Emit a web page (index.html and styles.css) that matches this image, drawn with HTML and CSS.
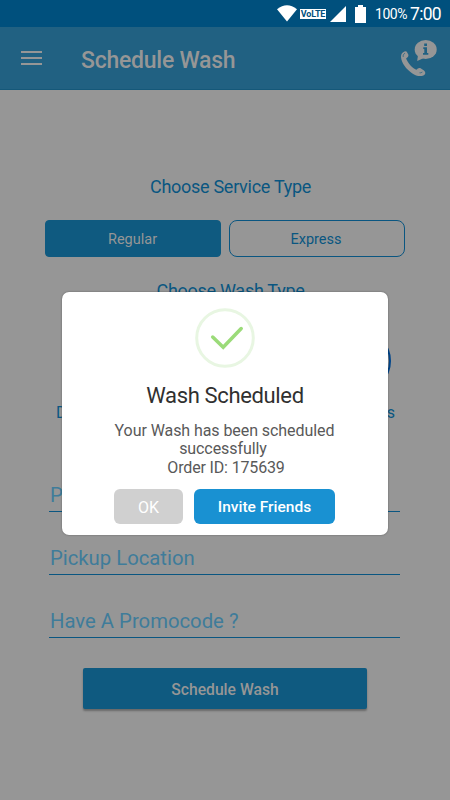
FILE: index.html
```html
<!DOCTYPE html>
<html lang="en">
<head>
<meta charset="utf-8">
<title>Schedule Wash</title>
<link rel="stylesheet" href="styles.css">
</head>
<body>
<div class="screen">
  <div class="status">
    <svg class="wifi" width="20" height="17" viewBox="0 0 20 17"><path d="M0 4.2Q10-3.6 20 4.2L10 16.5Z" fill="#fff"/></svg>
    <span class="volte"><b>VoLTE</b></span>
    <svg class="signal" width="16" height="16" viewBox="0 0 16 16"><path d="M16 0V16H0Z" fill="#fff"/></svg>
    <svg class="battery" width="11" height="18" viewBox="0 0 11 18"><path d="M3 0H8V2H11V18H0V2H3Z" fill="#fff"/></svg>
    <span class="percent">100%</span>
    <span class="time">7:00</span>
  </div>
  <header class="appbar">
    <div class="menu"><i></i><i></i><i></i></div>
    <h1>Schedule Wash</h1>
    <svg class="call" width="37" height="38" viewBox="0 0 37 38">
      <path d="M3.2 13.2Q1 14.2 1 18C1.4 24 6.2 30.2 12 34.2C16 36.8 20 38 23.4 36.4C25.8 35.4 25.8 33 24 31.4L20.6 29.2C18.8 28.3 17.5 29.7 16.4 30.7C12.4 29.6 7.6 23.5 6.1 19.5C7.2 18.6 8.8 17.8 8.4 15.8L7.2 13.4C6.4 11.8 4.8 12.1 3.2 13.2Z" fill="#969696"/>
      <path d="M3.2 18V16L5 14M19.5 33.8Q20.8 34.2 22.4 33" fill="none" stroke="#216182" stroke-width=".7"/>
      <ellipse cx="25.7" cy="10.5" rx="11" ry="9.5" fill="#969696"/><path d="M18 16L17.2 22L25 18.5Z" fill="#969696"/>
      <path d="M24.2 4.4H27V7H24.2ZM23.3 8.3H27V14H28.3V15.7H23V14H24.3V10H23.3Z" fill="#216182"/>
    </svg>
  </header>
  <main class="form">
    <h2 class="service-title">Choose Service Type</h2>
    <div class="services"><div class="service active">Regular</div><div class="service">Express</div></div>
    <h2 class="wash-title">Choose Wash Type</h2>
    <div class="washes">
      <div class="wash"><div class="ring"></div><span>Dry Clean</span></div>
      <div class="wash"><div class="ring"></div><span>Press</span></div>
    </div>
    <div class="field">Pickup</div>
    <div class="field">Pickup Location</div>
    <div class="field">Have A Promocode ?</div>
    <div class="submit">Schedule Wash</div>
  </main>
  <section class="dialog">
    <svg class="check" width="60" height="60" viewBox="0 0 60 60" fill="none"><circle cx="30" cy="30" r="28.3" stroke="#e8f6e2" stroke-width="3"/><path d="M17.7 29L28.2 39.3L46.2 20.5" stroke="#9bdb79" stroke-width="3.5" stroke-linecap="round"/></svg>
    <div class="title">Wash Scheduled</div>
    <p>Your Wash has been scheduled<br><span class="second">successfully</span><br><span class="order">Order ID: 175639</span></p>
    <div class="actions"><div class="btn ok">OK</div><div class="btn invite">Invite Friends</div></div>
  </section>
</div>
</body>
</html>
```
FILE: styles.css
```css
* { box-sizing: border-box; }
body { margin: 0; font-family: Roboto, "Liberation Sans", sans-serif; }
h1, h2, p { margin: 0; font-weight: 400; }
.screen { position: relative; width: 450px; height: 800px; overflow: hidden; background: #969696; }
.status { height: 27px; background: #00507d; color: #fff; display: flex; align-items: center; padding-left: 277px; }
.status svg { flex: none; }
.wifi { margin-right: 3px; }
.volte { width: 26px; height: 10px; background: #fff; color: #00507d; font-size: 9px; line-height: 10.5px; text-align: center; flex: none; }
.volte b { font-weight: 700; letter-spacing: -.15px; }
.signal { margin-left: 4px; }
.battery { margin-left: 9px; }
.percent { margin-left: 9px; width: 34px; font-size: 14px; line-height: 18px; padding-top: 1px; letter-spacing: -.45px; }
.time { font-size: 17.5px; line-height: 20px; width: 32px; margin-left: 1px; padding-top: 1px; letter-spacing: -.7px; white-space: nowrap; }
.appbar { height: 63px; background: #216182; border-bottom: 1px solid #155879; display: flex; color: #969696; }
.menu { margin: 24px 0 0 21px; width: 21px; display: flex; flex-direction: column; gap: 4px; }
.menu i { height: 2px; background: #969696; }
h1 { margin: 18px 0 0 39px; width: 300px; font-size: 23px; line-height: 31px; font-weight: 500; letter-spacing: -.25px; }
.call { margin: 12px 0 0 19px; flex: none; }
.form { color: #0a5681; padding: 87px 45px 0; }
h2 { font-size: 18px; line-height: 20px; text-align: center; letter-spacing: -.28px; }
.service-title { padding-left: 11px; }
.services { display: flex; gap: 8px; margin-top: 23px; }
.service { width: 176px; height: 37px; border: 1px solid #0a5681; border-radius: 8px; text-align: center; font-size: 14.5px; line-height: 37px; padding-right: 2px; }
.service.active { background: #0f5a80; border-color: #0f5a80; border-radius: 4px; color: #969696; padding-right: 1px; }
.wash-title { margin-top: 24px; padding-left: 11px; }
.washes { display: flex; justify-content: space-between; padding: 29px 10px 0 11px; height: 122px; font-size: 16px; }
.wash { width: 90px; }
.wash:last-child { text-align: right; }
.ring { width: 62px; height: 62px; border: 2px solid #00458a; border-radius: 50%; margin-left: 14px; }
.wash:last-child .ring { margin-left: 24px; }
.wash span { display: block; margin-top: 11px; line-height: 20px; }
.field { margin: 0 5px 25px 4px; height: 38px; padding: 7px 0 0 1px; border-bottom: 1px solid #0a5681; font-size: 20.3px; line-height: 28px; color: #3f7c9a; }
.washes + .field { margin-top: 51px; }
.submit { margin: 30px 38px 0; height: 41px; width: 284px; border-radius: 2px; background: #0f5a80; box-shadow: 0 2px 2px rgba(0,0,0,.3); color: #969696; font-size: 15.7px; line-height: 43px; font-weight: 500; text-align: center; }
.dialog { position: absolute; left: 62px; top: 292px; width: 326px; height: 243px; padding-top: 16px; background: #fff; border-radius: 7px; box-shadow: 0 0 2px rgba(0,0,0,.4); display: flex; flex-direction: column; align-items: center; }
.title { margin-top: 14px; font-size: 22px; line-height: 27px; color: #303030; letter-spacing: -.35px; }
.dialog p { margin-top: 13px; padding-right: 1px; font-size: 16px; line-height: 18.3px; letter-spacing: -.07px; color: #595959; text-align: center; }
.second { margin-right: 3px; }
.order { padding-left: 3px; letter-spacing: -.15px; }
.actions { display: flex; gap: 11px; margin: 12px 0 0; padding-right: 1px; }
.btn { height: 35px; border-radius: 6px; color: #fff; text-align: center; font-size: 16px; line-height: 37px; }
.ok { width: 69px; background: #d0d0d0; }
.invite { width: 141px; background: #1991d2; font-size: 15.5px; font-weight: 500; }
```
